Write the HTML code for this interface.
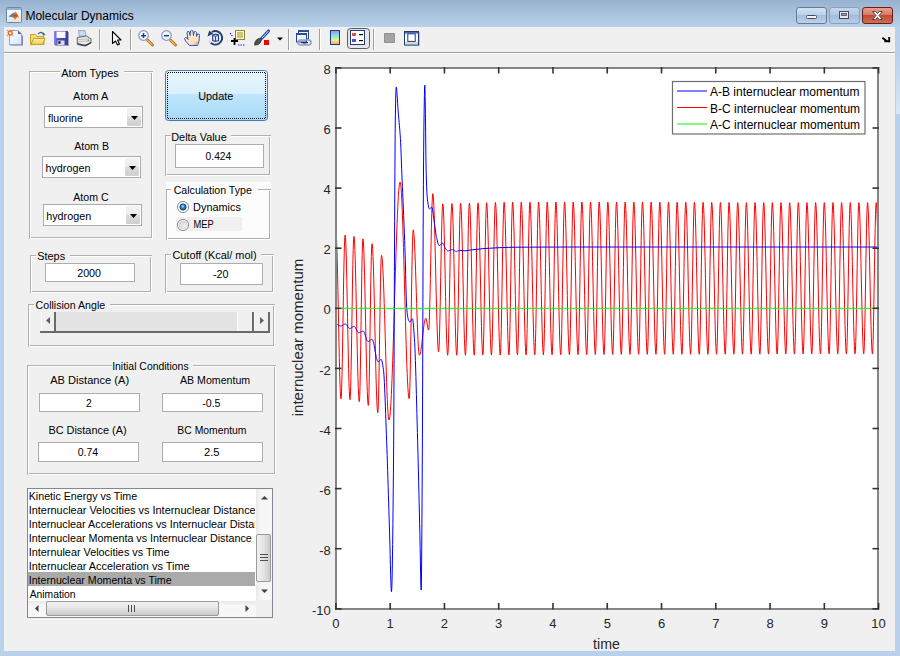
<!DOCTYPE html>
<html><head><meta charset="utf-8"><style>
html,body{margin:0;padding:0;width:900px;height:656px;overflow:hidden;background:#f0f0f0}
svg{display:block}
text{font-family:"Liberation Sans", sans-serif}
</style></head><body>
<svg width="900" height="656" viewBox="0 0 900 656">
<defs><linearGradient id="tb" x1="0" y1="0" x2="0" y2="1"><stop offset="0" stop-color="#97b2d0"/><stop offset="1" stop-color="#b9d1ea"/></linearGradient><linearGradient id="btnU" x1="0" y1="0" x2="0" y2="1"><stop offset="0" stop-color="#eaf6fd"/><stop offset="0.465" stop-color="#d9f0fc"/><stop offset="0.47" stop-color="#bee6fd"/><stop offset="1" stop-color="#a7d9f5"/></linearGradient><linearGradient id="ddb" x1="0" y1="0" x2="0" y2="1"><stop offset="0" stop-color="#f2f2f2"/><stop offset="0.47" stop-color="#ececec"/><stop offset="0.48" stop-color="#dcdcdc"/><stop offset="1" stop-color="#cfcfcf"/></linearGradient><radialGradient id="rsel" cx="0.45" cy="0.4" r="0.6"><stop offset="0" stop-color="#5cc4f8"/><stop offset="0.6" stop-color="#1a86c8"/><stop offset="1" stop-color="#0e4a80"/></radialGradient><linearGradient id="runsel" x1="0" y1="0" x2="1" y2="1"><stop offset="0" stop-color="#cfcfcf"/><stop offset="1" stop-color="#fafafa"/></linearGradient><linearGradient id="vth" x1="0" y1="0" x2="1" y2="0"><stop offset="0" stop-color="#f2f2f2"/><stop offset="0.45" stop-color="#e6e6e6"/><stop offset="1" stop-color="#c9c9c9"/></linearGradient><linearGradient id="hth" x1="0" y1="0" x2="0" y2="1"><stop offset="0" stop-color="#f2f2f2"/><stop offset="0.45" stop-color="#e6e6e6"/><stop offset="1" stop-color="#c9c9c9"/></linearGradient><linearGradient id="vtr" x1="0" y1="0" x2="1" y2="0"><stop offset="0" stop-color="#e8e8e8"/><stop offset="0.3" stop-color="#f6f6f6"/><stop offset="1" stop-color="#f8f8f8"/></linearGradient><linearGradient id="htr" x1="0" y1="0" x2="0" y2="1"><stop offset="0" stop-color="#e8e8e8"/><stop offset="0.3" stop-color="#f6f6f6"/><stop offset="1" stop-color="#f8f8f8"/></linearGradient><linearGradient id="rref" x1="0" y1="0" x2="0" y2="1"><stop offset="0" stop-color="#b9d1ea"/><stop offset="1" stop-color="#dae7f5"/></linearGradient></defs><rect x="0" y="0" width="900" height="656" fill="#b9d1ea" /><rect x="0" y="0" width="900" height="27" fill="url(#tb)" /><rect x="4" y="27" width="891" height="624" fill="#f0f0f0" /><rect x="896" y="52" width="4" height="62" fill="url(#rref)" /><text x="25.42" y="20" font-size="12.3" fill="#000" textLength="108.29" lengthAdjust="spacingAndGlyphs" >Molecular Dynamics</text><rect x="4" y="52" width="891" height="1" fill="#a0a0a0" /><rect x="4" y="53" width="891" height="1" fill="#ffffff" /><rect x="99" y="29" width="1" height="21" fill="#a0a0a0" /><rect x="100" y="29" width="1" height="21" fill="#ffffff" /><rect x="130" y="29" width="1" height="21" fill="#a0a0a0" /><rect x="131" y="29" width="1" height="21" fill="#ffffff" /><rect x="288" y="29" width="1" height="21" fill="#a0a0a0" /><rect x="289" y="29" width="1" height="21" fill="#ffffff" /><rect x="319" y="29" width="1" height="21" fill="#a0a0a0" /><rect x="320" y="29" width="1" height="21" fill="#ffffff" /><rect x="373" y="29" width="1" height="21" fill="#a0a0a0" /><rect x="374" y="29" width="1" height="21" fill="#ffffff" /><rect x="29" y="71" width="124" height="1" fill="#b0b0b0" /><rect x="29" y="71" width="1" height="168" fill="#b0b0b0" /><rect x="30" y="72" width="122" height="1" fill="#ffffff" /><rect x="30" y="72" width="1" height="166" fill="#ffffff" /><rect x="151" y="73" width="1" height="165" fill="#b0b0b0" /><rect x="31" y="237" width="121" height="1" fill="#b0b0b0" /><rect x="152" y="72" width="1" height="167" fill="#ffffff" /><rect x="30" y="238" width="123" height="1" fill="#ffffff" /><rect x="60" y="70" width="64" height="4" fill="#f0f0f0" /><text x="61.20" y="77" font-size="11" fill="#000" textLength="57.49" lengthAdjust="spacingAndGlyphs" >Atom Types</text><text x="73.10" y="100" font-size="11" fill="#000" textLength="35.27" lengthAdjust="spacingAndGlyphs" >Atom A</text><text x="74.20" y="150" font-size="11" fill="#000" textLength="34.78" lengthAdjust="spacingAndGlyphs" >Atom B</text><text x="73.30" y="201" font-size="11" fill="#000" textLength="35.36" lengthAdjust="spacingAndGlyphs" >Atom C</text><rect x="44" y="106" width="99" height="22" fill="#ffffff" /><rect x="44" y="106" width="99" height="1" fill="#acacb0" /><rect x="44" y="127" width="99" height="1" fill="#acacb0" /><rect x="44" y="106" width="1" height="22" fill="#acacb0" /><rect x="142" y="106" width="1" height="22" fill="#acacb0" /><rect x="127" y="108" width="14" height="18" fill="url(#ddb)" rx="1.5"/><path d="M131 116h7l-3.5 4z" fill="#000"/><text x="48.00" y="122" font-size="11" fill="#000" textLength="34.78" lengthAdjust="spacingAndGlyphs" >fluorine</text><rect x="42" y="156" width="99" height="22" fill="#ffffff" /><rect x="42" y="156" width="99" height="1" fill="#acacb0" /><rect x="42" y="177" width="99" height="1" fill="#acacb0" /><rect x="42" y="156" width="1" height="22" fill="#acacb0" /><rect x="140" y="156" width="1" height="22" fill="#acacb0" /><rect x="125" y="158" width="14" height="18" fill="url(#ddb)" rx="1.5"/><path d="M129 166h7l-3.5 4z" fill="#000"/><text x="45.50" y="172" font-size="11" fill="#000" textLength="44.88" lengthAdjust="spacingAndGlyphs" >hydrogen</text><rect x="43" y="204" width="99" height="22" fill="#ffffff" /><rect x="43" y="204" width="99" height="1" fill="#acacb0" /><rect x="43" y="225" width="99" height="1" fill="#acacb0" /><rect x="43" y="204" width="1" height="22" fill="#acacb0" /><rect x="141" y="204" width="1" height="22" fill="#acacb0" /><rect x="126" y="206" width="14" height="18" fill="url(#ddb)" rx="1.5"/><path d="M130 214h7l-3.5 4z" fill="#000"/><text x="46.20" y="220" font-size="11" fill="#000" textLength="45.08" lengthAdjust="spacingAndGlyphs" >hydrogen</text><rect x="165.5" y="70.5" width="102" height="50" rx="3" ry="3" fill="url(#btnU)" stroke="#3c7fb1" stroke-width="1"/><rect x="167" y="72" width="99" height="1" fill="url(#dots)" /><rect x="167" y="118" width="99" height="1" fill="url(#dots)" /><rect x="167" y="72" width="1" height="47" fill="url(#dots)" /><rect x="265" y="72" width="1" height="47" fill="url(#dots)" /><text x="198.21" y="100" font-size="11" fill="#000" textLength="35.07" lengthAdjust="spacingAndGlyphs" >Update</text><rect x="165" y="135" width="106" height="1" fill="#b0b0b0" /><rect x="165" y="135" width="1" height="41" fill="#b0b0b0" /><rect x="166" y="136" width="104" height="1" fill="#ffffff" /><rect x="166" y="136" width="1" height="39" fill="#ffffff" /><rect x="269" y="137" width="1" height="38" fill="#b0b0b0" /><rect x="167" y="174" width="103" height="1" fill="#b0b0b0" /><rect x="270" y="136" width="1" height="40" fill="#ffffff" /><rect x="166" y="175" width="105" height="1" fill="#ffffff" /><rect x="171" y="134" width="60" height="4" fill="#f0f0f0" /><text x="171.21" y="141" font-size="11" fill="#000" textLength="55.55" lengthAdjust="spacingAndGlyphs" >Delta Value</text><rect x="175" y="144" width="89" height="24" fill="#ffffff" /><rect x="175" y="144" width="89" height="1" fill="#abadb3" /><rect x="175" y="167" width="89" height="1" fill="#abadb3" /><rect x="175" y="144" width="1" height="24" fill="#abadb3" /><rect x="263" y="144" width="1" height="24" fill="#abadb3" /><text x="205.60" y="160" font-size="11" fill="#000" textLength="25.66" lengthAdjust="spacingAndGlyphs" >0.424</text><rect x="166" y="182" width="105" height="58" fill="#fcfcfc" /><rect x="166" y="189" width="105" height="1" fill="#b0b0b0" /><rect x="166" y="189" width="1" height="51" fill="#b0b0b0" /><rect x="167" y="190" width="103" height="1" fill="#ffffff" /><rect x="167" y="190" width="1" height="49" fill="#ffffff" /><rect x="269" y="191" width="1" height="48" fill="#b0b0b0" /><rect x="168" y="238" width="102" height="1" fill="#b0b0b0" /><rect x="270" y="190" width="1" height="50" fill="#ffffff" /><rect x="167" y="239" width="104" height="1" fill="#ffffff" /><rect x="171" y="188" width="87" height="4" fill="#fcfcfc" /><text x="173.70" y="194" font-size="11" fill="#000" textLength="78.12" lengthAdjust="spacingAndGlyphs" >Calculation Type</text><rect x="176" y="217" width="66" height="14" fill="#f0f0f0" /><circle cx="183" cy="207" r="5.6" fill="#fdfdfd" stroke="#8a8a8a" stroke-width="1"/><circle cx="183" cy="207" r="3.1" fill="url(#rsel)" stroke="#163d66" stroke-width="1"/><circle cx="182.8" cy="206.2" r="1.1" fill="#7fd0ff" opacity="0.9"/><circle cx="183" cy="225" r="5.6" fill="#fdfdfd" stroke="#8a8a8a" stroke-width="1"/><circle cx="183" cy="225" r="4" fill="url(#runsel)" stroke="#c4c4c4" stroke-width="0.6"/><text x="193.11" y="211" font-size="11" fill="#000" textLength="47.78" lengthAdjust="spacingAndGlyphs" >Dynamics</text><text x="193.55" y="228" font-size="11" fill="#000" textLength="20.22" lengthAdjust="spacingAndGlyphs" >MEP</text><rect x="30" y="255" width="122" height="1" fill="#b0b0b0" /><rect x="30" y="255" width="1" height="38" fill="#b0b0b0" /><rect x="31" y="256" width="120" height="1" fill="#ffffff" /><rect x="31" y="256" width="1" height="36" fill="#ffffff" /><rect x="150" y="257" width="1" height="35" fill="#b0b0b0" /><rect x="32" y="291" width="119" height="1" fill="#b0b0b0" /><rect x="151" y="256" width="1" height="37" fill="#ffffff" /><rect x="31" y="292" width="121" height="1" fill="#ffffff" /><rect x="36" y="254" width="34" height="4" fill="#f0f0f0" /><text x="37.20" y="260" font-size="11" fill="#000" textLength="27.94" lengthAdjust="spacingAndGlyphs" >Steps</text><rect x="45" y="263" width="90" height="19" fill="#ffffff" /><rect x="45" y="263" width="90" height="1" fill="#abadb3" /><rect x="45" y="281" width="90" height="1" fill="#abadb3" /><rect x="45" y="263" width="1" height="19" fill="#abadb3" /><rect x="134" y="263" width="1" height="19" fill="#abadb3" /><text x="77.20" y="277" font-size="11" fill="#000" textLength="23.87" lengthAdjust="spacingAndGlyphs" >2000</text><rect x="165" y="254" width="109" height="1" fill="#b0b0b0" /><rect x="165" y="254" width="1" height="39" fill="#b0b0b0" /><rect x="166" y="255" width="107" height="1" fill="#ffffff" /><rect x="166" y="255" width="1" height="37" fill="#ffffff" /><rect x="272" y="256" width="1" height="36" fill="#b0b0b0" /><rect x="167" y="291" width="106" height="1" fill="#b0b0b0" /><rect x="273" y="255" width="1" height="38" fill="#ffffff" /><rect x="166" y="292" width="108" height="1" fill="#ffffff" /><rect x="171" y="253" width="90" height="4" fill="#f0f0f0" /><text x="172.40" y="259" font-size="11" fill="#000" textLength="84.18" lengthAdjust="spacingAndGlyphs" >Cutoff (Kcal/ mol)</text><rect x="180" y="263" width="83" height="22" fill="#ffffff" /><rect x="180" y="263" width="83" height="1" fill="#abadb3" /><rect x="180" y="284" width="83" height="1" fill="#abadb3" /><rect x="180" y="263" width="1" height="22" fill="#abadb3" /><rect x="262" y="263" width="1" height="22" fill="#abadb3" /><text x="213.00" y="278" font-size="11" fill="#000" textLength="15.51" lengthAdjust="spacingAndGlyphs" >-20</text><rect x="28" y="304" width="247" height="1" fill="#b0b0b0" /><rect x="28" y="304" width="1" height="43" fill="#b0b0b0" /><rect x="29" y="305" width="245" height="1" fill="#ffffff" /><rect x="29" y="305" width="1" height="41" fill="#ffffff" /><rect x="273" y="306" width="1" height="40" fill="#b0b0b0" /><rect x="30" y="345" width="244" height="1" fill="#b0b0b0" /><rect x="274" y="305" width="1" height="42" fill="#ffffff" /><rect x="29" y="346" width="246" height="1" fill="#ffffff" /><rect x="34" y="303" width="76" height="4" fill="#f0f0f0" /><text x="35.60" y="309" font-size="11" fill="#000" textLength="69.55" lengthAdjust="spacingAndGlyphs" >Collision Angle</text><rect x="41" y="312" width="229" height="21" fill="#e3e3e3" /><rect x="41" y="312" width="15" height="21" fill="#f0f0f0" /><rect x="41" y="312" width="1" height="19" fill="#ffffff" /><rect x="54" y="312" width="2" height="21" fill="#6a6a6a" /><rect x="237" y="312" width="17" height="21" fill="#f0f0f0" /><rect x="237" y="312" width="1" height="19" fill="#ffffff" /><rect x="252" y="312" width="2" height="21" fill="#6a6a6a" /><rect x="254" y="312" width="16" height="21" fill="#f0f0f0" /><rect x="254" y="312" width="1" height="19" fill="#ffffff" /><rect x="268" y="312" width="2" height="21" fill="#6a6a6a" /><rect x="40" y="331" width="230" height="2" fill="#6a6a6a" /><path d="M46 320.5l4-3.5v7z" fill="#606060"/><path d="M264 320.5l-4-3.5v7z" fill="#606060"/><rect x="27" y="365" width="249" height="1" fill="#b0b0b0" /><rect x="27" y="365" width="1" height="110" fill="#b0b0b0" /><rect x="28" y="366" width="247" height="1" fill="#ffffff" /><rect x="28" y="366" width="1" height="108" fill="#ffffff" /><rect x="274" y="367" width="1" height="107" fill="#b0b0b0" /><rect x="29" y="473" width="246" height="1" fill="#b0b0b0" /><rect x="275" y="366" width="1" height="109" fill="#ffffff" /><rect x="28" y="474" width="248" height="1" fill="#ffffff" /><rect x="112" y="364" width="81" height="4" fill="#f0f0f0" /><text x="112.15" y="370" font-size="11" fill="#000" textLength="76.48" lengthAdjust="spacingAndGlyphs" >Initial Conditions</text><text x="50.20" y="384" font-size="11" fill="#000" textLength="78.95" lengthAdjust="spacingAndGlyphs" >AB Distance (A)</text><text x="180.00" y="384" font-size="11" fill="#000" textLength="70.12" lengthAdjust="spacingAndGlyphs" >AB Momentum</text><text x="48.41" y="434" font-size="11" fill="#000" textLength="78.15" lengthAdjust="spacingAndGlyphs" >BC Distance (A)</text><text x="177.36" y="434" font-size="11" fill="#000" textLength="69.08" lengthAdjust="spacingAndGlyphs" >BC Momentum</text><rect x="39" y="393" width="101" height="19" fill="#ffffff" /><rect x="39" y="393" width="101" height="1" fill="#abadb3" /><rect x="39" y="411" width="101" height="1" fill="#abadb3" /><rect x="39" y="393" width="1" height="19" fill="#abadb3" /><rect x="139" y="393" width="1" height="19" fill="#abadb3" /><text x="86.10" y="407" font-size="11" fill="#000" textLength="5.72" lengthAdjust="spacingAndGlyphs" >2</text><rect x="162" y="393" width="101" height="19" fill="#ffffff" /><rect x="162" y="393" width="101" height="1" fill="#abadb3" /><rect x="162" y="411" width="101" height="1" fill="#abadb3" /><rect x="162" y="393" width="1" height="19" fill="#abadb3" /><rect x="262" y="393" width="1" height="19" fill="#abadb3" /><text x="202.20" y="407" font-size="11" fill="#000" textLength="18.37" lengthAdjust="spacingAndGlyphs" >-0.5</text><rect x="38" y="442" width="101" height="20" fill="#ffffff" /><rect x="38" y="442" width="101" height="1" fill="#abadb3" /><rect x="38" y="461" width="101" height="1" fill="#abadb3" /><rect x="38" y="442" width="1" height="20" fill="#abadb3" /><rect x="138" y="442" width="1" height="20" fill="#abadb3" /><text x="77.80" y="456" font-size="11" fill="#000" textLength="20.40" lengthAdjust="spacingAndGlyphs" >0.74</text><rect x="162" y="442" width="101" height="20" fill="#ffffff" /><rect x="162" y="442" width="101" height="1" fill="#abadb3" /><rect x="162" y="461" width="101" height="1" fill="#abadb3" /><rect x="162" y="442" width="1" height="20" fill="#abadb3" /><rect x="262" y="442" width="1" height="20" fill="#abadb3" /><text x="203.90" y="456" font-size="11" fill="#000" textLength="15.60" lengthAdjust="spacingAndGlyphs" >2.5</text><rect x="27" y="488" width="246" height="130" fill="#ffffff" /><rect x="27" y="488" width="246" height="1" fill="#828790" /><rect x="27" y="617" width="246" height="1" fill="#828790" /><rect x="27" y="488" width="1" height="130" fill="#828790" /><rect x="272" y="488" width="1" height="130" fill="#828790" /><rect x="28" y="572" width="227" height="14" fill="#aaaaaa" /><svg x="28" y="489" width="227" height="112" overflow="hidden"><g transform="translate(-28,-489)"><text x="28.73" y="500" font-size="11" fill="#000" textLength="108.45" lengthAdjust="spacingAndGlyphs">Kinetic Energy vs Time</text><text x="28.71" y="514" font-size="11" fill="#000" textLength="226.97" lengthAdjust="spacingAndGlyphs">Internuclear Velocities vs Internuclear Distance</text><text x="28.72" y="528" font-size="11" fill="#000" textLength="242.91" lengthAdjust="spacingAndGlyphs">Internuclear Accelerations vs Internuclear Distance</text><text x="28.72" y="542" font-size="11" fill="#000" textLength="223.04" lengthAdjust="spacingAndGlyphs">Internuclear Momenta vs Internuclear Distance</text><text x="28.71" y="556" font-size="11" fill="#000" textLength="140.96" lengthAdjust="spacingAndGlyphs">Internulear Velocities vs Time</text><text x="28.71" y="570" font-size="11" fill="#000" textLength="160.92" lengthAdjust="spacingAndGlyphs">Internuclear Acceleration vs Time</text><text x="28.73" y="584" font-size="11" fill="#000" textLength="142.92" lengthAdjust="spacingAndGlyphs">Internuclear Momenta vs Time</text><text x="29.70" y="598" font-size="11" fill="#000" textLength="45.93" lengthAdjust="spacingAndGlyphs">Animation</text></g></svg><rect x="256" y="489" width="16" height="111" fill="url(#vtr)" /><path d="M261 499.5l3.5-3.5l3.5 3.5z" fill="#404040"/><rect x="256.5" y="534.5" width="14" height="47" rx="1.5" fill="url(#vth)" stroke="#9a9a9a"/><rect x="260" y="554" width="8" height="1" fill="#505050" /><rect x="260" y="557" width="8" height="1" fill="#505050" /><rect x="260" y="560" width="8" height="1" fill="#505050" /><path d="M261 589.5l3.5 3.5l3.5-3.5z" fill="#404040"/><rect x="28" y="601" width="228" height="16" fill="url(#htr)" /><rect x="256" y="600" width="16" height="17" fill="#f0f0f0" /><rect x="46.5" y="601.5" width="172" height="14" rx="1.5" fill="url(#hth)" stroke="#9a9a9a"/><rect x="128" y="605" width="1" height="7" fill="#505050" /><rect x="131" y="605" width="1" height="7" fill="#505050" /><rect x="134" y="605" width="1" height="7" fill="#505050" /><path d="M35 608.5l3.5-3.5v7z" fill="#404040"/><path d="M249 608.5l-3.5-3.5v7z" fill="#404040"/><defs><linearGradient id="gpage" x1="0" y1="0" x2="1" y2="1"><stop offset="0" stop-color="#ffffff"/><stop offset="1" stop-color="#d6e6fa"/></linearGradient><linearGradient id="gfold" x1="0" y1="0" x2="0" y2="1"><stop offset="0" stop-color="#fff4b0"/><stop offset="1" stop-color="#f0c848"/></linearGradient><linearGradient id="gcbar" x1="0" y1="0" x2="0" y2="1"><stop offset="0" stop-color="#a090f0"/><stop offset="0.35" stop-color="#80e0f0"/><stop offset="0.7" stop-color="#f0f080"/><stop offset="1" stop-color="#f8a070"/></linearGradient><linearGradient id="gmin" x1="0" y1="0" x2="0" y2="1"><stop offset="0" stop-color="#d4e3f3"/><stop offset="0.45" stop-color="#bcd2ea"/><stop offset="0.5" stop-color="#a4bedc"/><stop offset="1" stop-color="#bcd3ec"/></linearGradient><linearGradient id="gmax" x1="0" y1="0" x2="0" y2="1"><stop offset="0" stop-color="#c4d6ec"/><stop offset="0.45" stop-color="#b2c9e4"/><stop offset="0.5" stop-color="#a2bcdc"/><stop offset="1" stop-color="#b6cee8"/></linearGradient><linearGradient id="gclose" x1="0" y1="0" x2="0" y2="1"><stop offset="0" stop-color="#e8a091"/><stop offset="0.45" stop-color="#d77c69"/><stop offset="0.5" stop-color="#c44a30"/><stop offset="1" stop-color="#d0705a"/></linearGradient><linearGradient id="gicon" x1="0" y1="0" x2="0" y2="1"><stop offset="0" stop-color="#ffffff"/><stop offset="1" stop-color="#e4e4e4"/></linearGradient><linearGradient id="gpeak" x1="0" y1="0" x2="0" y2="1"><stop offset="0" stop-color="#f0c020"/><stop offset="0.5" stop-color="#e04010"/><stop offset="1" stop-color="#f0a020"/></linearGradient><pattern id="dots" patternUnits="userSpaceOnUse" width="2" height="2"><rect x="0" y="0" width="1" height="1" fill="#000"/><rect x="1" y="1" width="1" height="1" fill="#000"/></pattern><linearGradient id="gsave" x1="0" y1="0" x2="1" y2="0"><stop offset="0" stop-color="#8a8ae8"/><stop offset="0.3" stop-color="#5050c0"/><stop offset="1" stop-color="#3a3aa0"/></linearGradient></defs><rect x="6.5" y="7.5" width="15" height="15" rx="1" fill="url(#gicon)" stroke="#75869a"/><rect x="7" y="8" width="14" height="2" fill="#8fb4d8"/><path d="M8.5 16.5 L13 13 L15 12.5 L13.5 17.5 Z" fill="#3a8ad0"/><path d="M13 17 L15.3 11 L17 13.5 L19.5 19 L17.5 16.5 L15 20 Z" fill="url(#gpeak)"/><rect x="796.5" y="7.5" width="30" height="16" rx="2.5" fill="url(#gmin)" stroke="#6a7a90"/><rect x="806.5" y="15.5" width="10" height="3" rx="1" fill="#f4f4f4" stroke="#4a4a5a"/><rect x="829.5" y="7.5" width="30" height="16" rx="2.5" fill="url(#gmax)" stroke="#8aa2bf"/><rect x="839.5" y="11.5" width="9" height="7" fill="#e8e8e8" stroke="#4a4a5a"/><rect x="841.5" y="13.5" width="5" height="2" fill="#8aa2bf" stroke="#4a4a5a" stroke-width="0.8"/><rect x="862.5" y="7.5" width="30" height="16" rx="2.5" fill="url(#gclose)" stroke="#6e1c14"/><path d="M872.5 11.5 L875.5 11.5 L877.5 13.5 L879.5 11.5 L882.5 11.5 L879 15.5 L882.5 19.5 L879.5 19.5 L877.5 17.3 L875.5 19.5 L872.5 19.5 L876 15.5 Z" fill="#ffffff" stroke="#4a4a4a" stroke-width="1"/><path d="M10.5 32 h8.5 l3.8 3.8 v9.8 h-12.3 z" fill="#6a6ea8"/><path d="M9.5 30.5 h8.5 l3.5 3.5 v10.5 h-12 z" fill="url(#gpage)" stroke="#86a6da"/><path d="M18 30.5 v3.5 h3.5 z" fill="#5a5ea0"/><circle cx="10.2" cy="33" r="2" fill="#eef080" stroke="#e86a3a" stroke-width="1.4"/><circle cx="7.3" cy="30.3" r="0.6" fill="#e86a3a"/><circle cx="12.9" cy="30.3" r="0.6" fill="#e86a3a"/><circle cx="7.3" cy="35.7" r="0.6" fill="#e86a3a"/><circle cx="12.9" cy="35.7" r="0.6" fill="#e86a3a"/><path d="M30.5 34.5 h5 l1.5 2 h7 v8 h-13.5 z" fill="#f6dc78" stroke="#c9a020"/><path d="M31 44.5 l2.5 -6 h11.5 l-2.5 6 z" fill="url(#gfold)" stroke="#c9a020"/><path d="M38 34 q3 -3 6 0" fill="none" stroke="#4a6aa8" stroke-width="1.2"/><path d="M43 32.5 l2.5 2.5 l-3 0.5 z" fill="#3a5a98"/><rect x="55" y="32" width="14" height="14" fill="#5a6a8a" opacity="0.55"/><rect x="54" y="31" width="14" height="14" rx="0.5" fill="url(#gsave)"/><rect x="56.5" y="31.5" width="9" height="6.5" fill="#f8f8ff"/><rect x="57.5" y="40.5" width="7" height="4.5" fill="#d8d8ec"/><rect x="58.3" y="41.3" width="2.2" height="2.4" fill="#101020"/><path d="M78.5 30.5 L84.8 30.5 L86.3 36.2 L79.2 36.2 Z" fill="#c4dcfa" stroke="#7c88c0" stroke-width="0.7"/><path d="M77.3 37.5 L86.5 36 L91 39 L91 43 L85.5 46 L77.3 44.5 Z" fill="#ececec" stroke="#5a5a5a" stroke-width="0.9" stroke-linejoin="round"/><path d="M78 39.5 L89.5 38.8 M78 41.5 L90 41" stroke="#a8a8a8" stroke-width="0.7"/><path d="M77.5 43.5 L85 45.5 L91 42.5" stroke="#303030" stroke-width="1.2" fill="none"/><rect x="87.6" y="39.6" width="1.4" height="1.4" fill="#38b838"/><rect x="83.5" y="44.3" width="1.6" height="1.2" fill="#6a6ad0"/><path d="M112.5 31.5 v12 l3 -2.5 l2 4 l2 -1 l-2 -4 h3.5 z" fill="#ffffff" stroke="#000" stroke-width="1.1" stroke-linejoin="round"/><path d="M147.5 40 l5 5" stroke="#b07020" stroke-width="3" stroke-linecap="round"/><path d="M147.5 40 l4.5 4.5" stroke="#f0b040" stroke-width="1.6" stroke-linecap="round"/><circle cx="143.5" cy="35.5" r="4.8" fill="#e8f8fc" stroke="#9090d0" stroke-width="1.2"/><rect x="141.0" y="35" width="5" height="1.4" fill="#203a7a"/><rect x="142.8" y="33" width="1.4" height="5" fill="#203a7a"/><path d="M170.5 40 l5 5" stroke="#b07020" stroke-width="3" stroke-linecap="round"/><path d="M170.5 40 l4.5 4.5" stroke="#f0b040" stroke-width="1.6" stroke-linecap="round"/><circle cx="166.5" cy="35.5" r="4.8" fill="#e8f8fc" stroke="#9090d0" stroke-width="1.2"/><rect x="164.0" y="35" width="5" height="1.4" fill="#203a7a"/><path d="M189.5 45.5 L185.5 41 L184.5 38.5 L185.5 37.5 L187 38 L188 39.5 L187 33 L187.5 31.5 L189 31.5 L190 35.5 L190.5 31 L191.5 30.3 L193 31 L193.5 35.5 L194 32 L195.5 31.5 L196.5 32.5 L196.5 36.5 L197.5 34 L199 34 L199.5 35.5 L199 41 L197.5 45.5 Z" fill="#fde3c4" stroke="#2a58c8" stroke-width="1" stroke-linejoin="round"/><path d="M193 45 L197 45 L198.5 40 L196 42 Z" fill="#e8b47c" opacity="0.8"/><path d="M209.5 41.3 A6.8 6.8 0 1 0 211.9 32" fill="none" stroke="#223c7c" stroke-width="1.9"/><path d="M208.8 40.3 L210.8 42.8" stroke="#dfe3ee" stroke-width="2.2"/><path d="M207.4 36.4 L209.3 30.4 L213.2 33.8 Z" fill="#223c7c"/><path d="M212.7 35 L215.5 34 L218.5 35 L218.5 40.5 L215.5 41.5 L212.7 40.5 Z" fill="#dbe6fa" stroke="#223c7c" stroke-width="1.1"/><path d="M213 35.3 L215.5 36.3 L218.3 35.3 M215.5 36.3 V41" stroke="#223c7c" stroke-width="0.9" fill="none"/><rect x="235.5" y="30.5" width="9" height="9" fill="#fff8c0" stroke="#908830"/><rect x="237" y="32.5" width="6" height="0.9" fill="#908830"/><rect x="237" y="34.5" width="6" height="0.9" fill="#908830"/><rect x="237" y="36.5" width="6" height="0.9" fill="#908830"/><path d="M230 33 l3 4 M238 45 h7" stroke="#2020f0" stroke-width="1.1" stroke-dasharray="1.5 1"/><path d="M231 41 h7 M234.5 38 v7" stroke="#000" stroke-width="1.8"/><path d="M262 38 l6.5 -7" stroke="#3050b0" stroke-width="3.2" stroke-linecap="round"/><path d="M262 38 l6.5 -7" stroke="#c0d0f8" stroke-width="1" /><path d="M254.5 45 q0 -4 3 -6 l3 -1 l1 1.5 l-1 3 q-2 3 -6 2.5 z" fill="#505050" stroke="#303030" stroke-width="0.8"/><rect x="264" y="40" width="5" height="5" fill="#ee0000"/><path d="M277 37.5 h6 l-3 3 z" fill="#000"/><rect x="298.5" y="30.5" width="10" height="8.5" fill="#f4f6fc" stroke="#24428e"/><rect x="298" y="30" width="11" height="2" fill="#2c4c9c"/><rect x="296.5" y="33.5" width="10" height="8.5" fill="#eef2fa" stroke="#24428e"/><rect x="296" y="33" width="11" height="2" fill="#2c4c9c"/><rect x="298" y="40" width="7.5" height="5" rx="2.5" fill="none" stroke="#8ea2c4" stroke-width="1.6"/><rect x="303.5" y="40" width="7.5" height="5" rx="2.5" fill="none" stroke="#8ea2c4" stroke-width="1.6"/><rect x="301" y="42" width="7" height="1.2" fill="#1a2a5a"/><rect x="330.5" y="30.5" width="9" height="14" fill="url(#gcbar)" stroke="#203a80"/><rect x="347.5" y="28.5" width="22" height="20" rx="3" fill="#e6e6e6" stroke="#5a5a5a"/><rect x="350.5" y="30.5" width="14" height="14" fill="#ffffff" stroke="#203a80"/><rect x="352" y="33" width="4" height="3" fill="#e05050"/><rect x="352" y="39" width="4" height="3" fill="#5050e0"/><rect x="359" y="34" width="4" height="1.2" fill="#000"/><rect x="359" y="40" width="4" height="1.2" fill="#000"/><rect x="384" y="33" width="11" height="10" rx="1" fill="#909090"/><rect x="385" y="34" width="9" height="8" fill="#a4a4a4"/><rect x="405" y="32" width="15" height="14" fill="#8a9ab0" opacity="0.5"/><rect x="404.5" y="31.5" width="14" height="13.5" fill="#fbfbf4" stroke="#203a80"/><rect x="405" y="32" width="13" height="1.6" fill="#4a6ac0"/><rect x="407.8" y="33.8" width="7.4" height="7.6" fill="#ffffff" stroke="#203a80" stroke-width="1"/><rect x="405" y="42" width="13" height="2" fill="#ddd8c0"/><path d="M882.4 37.8 L887 41.2" stroke="#000" stroke-width="1.9"/><rect x="888.3" y="37" width="1.8" height="5.2" fill="#000"/><rect x="884.3" y="40.3" width="5.8" height="1.9" fill="#000"/>
<rect x="336" y="68" width="542" height="541" fill="#ffffff"/><svg x="336" y="68" width="542" height="541" overflow="hidden"><g transform="translate(-336,-68)"><path d="M335.90 233.50 L336.24 235.31 L336.58 240.65 L336.92 249.28 L337.26 260.85 L337.60 274.82 L337.94 290.61 L338.28 307.51 L338.62 324.79 L338.96 341.69 L339.30 357.48 L339.64 371.45 L339.98 383.02 L340.32 391.65 L340.66 396.99 L341.00 398.80 L341.34 396.01 L341.68 387.83 L342.02 374.83 L342.37 357.88 L342.71 338.13 L343.05 316.95 L343.39 295.77 L343.73 276.03 L344.08 259.07 L344.42 246.07 L344.76 237.89 L345.10 235.10 L345.45 237.16 L345.80 243.25 L346.15 253.06 L346.50 266.09 L346.85 281.69 L347.20 299.09 L347.55 317.40 L347.90 335.71 L348.25 353.11 L348.60 368.71 L348.95 381.74 L349.30 391.55 L349.65 397.64 L350.00 399.70 L350.35 396.39 L350.71 386.74 L351.06 371.52 L351.42 351.97 L351.77 329.67 L352.13 306.43 L352.48 284.13 L352.84 264.58 L353.19 249.36 L353.55 239.71 L353.90 236.40 L354.24 237.99 L354.57 242.69 L354.91 250.33 L355.25 260.61 L355.59 273.13 L355.93 287.42 L356.26 302.93 L356.60 319.05 L356.94 335.17 L357.27 350.68 L357.61 364.97 L357.95 377.49 L358.29 387.77 L358.62 395.41 L358.96 400.11 L359.30 401.70 L359.66 397.71 L360.02 386.14 L360.38 368.13 L360.74 345.42 L361.10 320.25 L361.46 295.08 L361.82 272.37 L362.18 254.36 L362.54 242.79 L362.90 238.80 L363.24 240.40 L363.57 245.14 L363.91 252.84 L364.25 263.20 L364.59 275.82 L364.93 290.22 L365.26 305.85 L365.60 322.10 L365.94 338.35 L366.27 353.98 L366.61 368.38 L366.95 381.00 L367.29 391.36 L367.62 399.06 L367.96 403.80 L368.30 405.40 L368.64 402.13 L368.97 392.57 L369.31 377.50 L369.65 358.14 L369.98 336.06 L370.32 313.04 L370.65 290.96 L370.99 271.60 L371.33 256.53 L371.66 246.97 L372.00 243.70 L372.34 245.14 L372.68 249.41 L373.02 256.36 L373.36 265.75 L373.71 277.28 L374.05 290.54 L374.39 305.08 L374.73 320.40 L375.07 336.00 L375.41 351.32 L375.75 365.86 L376.09 379.12 L376.44 390.65 L376.78 400.04 L377.12 406.99 L377.46 411.26 L377.80 412.70 L378.14 409.51 L378.47 400.21 L378.81 385.55 L379.15 366.72 L379.48 345.24 L379.82 322.86 L380.15 301.38 L380.49 282.55 L380.83 267.89 L381.16 258.59 L381.50 255.40 L381.84 256.24 L382.18 258.73 L382.52 262.84 L382.86 268.46 L383.20 275.50 L383.55 283.80 L383.89 293.21 L384.23 303.51 L384.57 314.51 L384.91 325.99 L385.25 337.70 L385.59 349.41 L385.93 360.89 L386.27 371.89 L386.61 382.19 L386.95 391.60 L387.30 399.90 L387.64 406.94 L387.98 412.56 L388.32 416.67 L388.66 419.16 L389.00 420.00 L389.34 419.46 L389.67 417.85 L390.01 415.18 L390.35 411.48 L390.68 406.77 L391.02 401.11 L391.35 394.54 L391.69 387.12 L392.03 378.93 L392.36 370.03 L392.70 360.50 L393.04 350.43 L393.37 339.92 L393.71 329.06 L394.05 317.94 L394.38 306.66 L394.72 295.34 L395.05 284.06 L395.39 272.94 L395.73 262.08 L396.06 251.57 L396.40 241.50 L396.74 231.97 L397.07 223.07 L397.41 214.88 L397.75 207.46 L398.08 200.89 L398.42 195.23 L398.75 190.52 L399.09 186.82 L399.43 184.15 L399.76 182.54 L400.10 182.00 L400.44 182.73 L400.77 184.92 L401.11 188.53 L401.45 193.52 L401.79 199.82 L402.12 207.35 L402.46 216.00 L402.80 225.65 L403.13 236.17 L403.47 247.43 L403.81 259.27 L404.14 271.54 L404.48 284.05 L404.82 296.65 L405.16 309.16 L405.49 321.43 L405.83 333.27 L406.17 344.52 L406.50 355.05 L406.84 364.70 L407.18 373.35 L407.51 380.88 L407.85 387.18 L408.19 392.17 L408.53 395.78 L408.86 397.97 L409.20 398.70 L409.53 395.82 L409.87 387.39 L410.20 373.98 L410.53 356.50 L410.87 336.14 L411.20 314.30 L411.53 292.46 L411.87 272.10 L412.20 254.62 L412.53 241.21 L412.87 232.78 L413.20 229.90 L413.54 230.85 L413.89 233.68 L414.23 238.29 L414.58 244.56 L414.92 252.28 L415.27 261.23 L415.61 271.12 L415.96 281.67 L416.30 292.55 L416.64 303.43 L416.99 313.98 L417.33 323.88 L417.68 332.82 L418.02 340.54 L418.37 346.81 L418.71 351.42 L419.06 354.25 L419.40 355.20 L419.74 354.95 L420.07 354.20 L420.41 352.97 L420.75 351.30 L421.08 349.23 L421.42 346.82 L421.76 344.13 L422.09 341.24 L422.43 338.23 L422.77 335.17 L423.11 332.16 L423.44 329.27 L423.78 326.58 L424.12 324.17 L424.45 322.10 L424.79 320.43 L425.13 319.20 L425.46 318.45 L425.80 318.20 L426.15 318.65 L426.50 319.93 L426.85 321.84 L427.20 324.10 L427.55 326.36 L427.90 328.27 L428.25 329.55 L428.60 330.00 L428.95 327.68 L429.30 320.87 L429.65 310.04 L430.00 295.93 L430.35 279.49 L430.70 261.85 L431.05 244.21 L431.40 227.78 L431.75 213.66 L432.10 202.83 L432.45 196.02 L432.80 193.70 L433.14 195.05 L433.48 199.04 L433.82 205.54 L434.16 214.33 L434.51 225.11 L434.85 237.51 L435.19 251.12 L435.53 265.46 L435.87 280.04 L436.21 294.38 L436.55 307.99 L436.89 320.39 L437.24 331.17 L437.58 339.96 L437.92 346.46 L438.26 350.45 L438.60 351.80 L438.95 349.28 L439.30 341.89 L439.65 330.13 L440.00 314.80 L440.35 296.95 L440.70 277.80 L441.05 258.65 L441.40 240.80 L441.75 225.47 L442.10 213.71 L442.45 206.32 L442.80 203.80 L443.15 205.70 L443.49 211.30 L443.84 220.33 L444.19 232.32 L444.53 246.68 L444.88 262.69 L445.23 279.55 L445.57 296.41 L445.92 312.42 L446.26 326.78 L446.61 338.77 L446.96 347.80 L447.30 353.40 L447.65 355.30 L448.00 352.71 L448.36 345.14 L448.71 333.08 L449.07 317.37 L449.42 299.07 L449.77 279.43 L450.13 259.79 L450.48 241.50 L450.84 225.78 L451.19 213.73 L451.55 206.15 L451.90 203.56 L452.25 205.46 L452.59 211.07 L452.94 220.11 L453.29 232.12 L453.63 246.50 L453.98 262.53 L454.32 279.41 L454.67 296.29 L455.02 312.32 L455.36 326.70 L455.71 338.71 L456.06 347.74 L456.40 353.35 L456.75 355.25 L457.10 352.18 L457.45 343.20 L457.80 329.04 L458.15 310.85 L458.50 290.10 L458.85 268.48 L459.20 247.74 L459.55 229.55 L459.90 215.39 L460.25 206.41 L460.60 203.33 L460.95 205.24 L461.29 210.85 L461.64 219.90 L461.99 231.92 L462.33 246.32 L462.68 262.37 L463.03 279.27 L463.37 296.17 L463.72 312.22 L464.06 326.62 L464.41 338.64 L464.76 347.69 L465.10 353.31 L465.45 355.21 L465.81 352.13 L466.17 343.14 L466.53 328.96 L466.89 310.75 L467.25 289.98 L467.60 268.33 L467.96 247.56 L468.32 229.35 L468.68 215.18 L469.04 206.18 L469.40 203.10 L469.75 205.01 L470.09 210.63 L470.44 219.69 L470.79 231.73 L471.13 246.15 L471.48 262.22 L471.82 279.14 L472.17 296.05 L472.52 312.12 L472.86 326.54 L473.21 338.58 L473.56 347.64 L473.90 353.26 L474.25 355.17 L474.59 352.08 L474.93 343.08 L475.27 328.89 L475.61 310.65 L475.95 289.86 L476.30 268.19 L476.64 247.39 L476.98 229.16 L477.32 214.97 L477.66 205.96 L478.00 202.88 L478.35 204.79 L478.69 210.42 L479.04 219.49 L479.39 231.54 L479.73 245.97 L480.08 262.06 L480.43 279.00 L480.77 295.94 L481.12 312.03 L481.46 326.46 L481.81 338.52 L482.16 347.59 L482.50 353.22 L482.85 355.12 L483.19 352.04 L483.53 343.02 L483.87 328.81 L484.21 310.56 L484.55 289.74 L484.90 268.04 L485.24 247.22 L485.58 228.97 L485.92 214.76 L486.26 205.75 L486.60 202.66 L486.95 204.57 L487.29 210.21 L487.64 219.29 L487.99 231.35 L488.33 245.80 L488.68 261.91 L489.03 278.87 L489.37 295.83 L489.72 311.94 L490.06 326.39 L490.41 338.45 L490.76 347.53 L491.10 353.17 L491.45 355.08 L491.81 351.99 L492.17 342.96 L492.53 328.74 L492.89 310.46 L493.25 289.62 L493.60 267.90 L493.96 247.05 L494.32 228.78 L494.68 214.55 L495.04 205.53 L495.40 202.43 L495.75 204.35 L496.09 209.99 L496.44 219.08 L496.79 231.16 L497.13 245.63 L497.48 261.76 L497.82 278.74 L498.17 295.71 L498.52 311.84 L498.86 326.31 L499.21 338.39 L499.56 347.48 L499.90 353.12 L500.25 355.04 L500.60 351.94 L500.95 342.91 L501.30 328.67 L501.65 310.38 L502.00 289.51 L502.35 267.77 L502.70 246.90 L503.05 228.61 L503.40 214.37 L503.75 205.34 L504.10 202.24 L504.45 204.16 L504.79 209.80 L505.14 218.90 L505.49 231.00 L505.83 245.48 L506.18 261.62 L506.53 278.62 L506.87 295.61 L507.22 311.76 L507.56 326.24 L507.91 338.33 L508.26 347.43 L508.60 353.08 L508.95 354.99 L509.32 351.25 L509.68 340.40 L510.05 323.50 L510.41 302.20 L510.78 278.60 L511.14 254.99 L511.51 233.69 L511.87 216.79 L512.24 205.94 L512.60 202.20 L512.95 204.11 L513.29 209.76 L513.64 218.86 L513.99 230.96 L514.33 245.44 L514.68 261.58 L515.03 278.58 L515.37 295.57 L515.72 311.71 L516.06 326.19 L516.41 338.29 L516.76 347.39 L517.10 353.04 L517.45 354.95 L517.80 351.86 L518.14 342.82 L518.49 328.58 L518.83 310.29 L519.18 289.43 L519.53 267.68 L519.87 246.82 L520.22 228.53 L520.56 214.29 L520.91 205.26 L521.26 202.16 L521.60 204.08 L521.95 209.72 L522.30 218.82 L522.64 230.92 L522.99 245.40 L523.34 261.54 L523.68 278.53 L524.03 295.53 L524.38 311.67 L524.72 326.15 L525.07 338.25 L525.41 347.34 L525.76 352.99 L526.11 354.91 L526.45 351.81 L526.80 342.78 L527.15 328.54 L527.49 310.25 L527.84 289.39 L528.18 267.65 L528.53 246.78 L528.88 228.49 L529.22 214.25 L529.57 205.22 L529.91 202.13 L530.26 204.04 L530.61 209.69 L530.95 218.79 L531.30 230.88 L531.65 245.36 L531.99 261.50 L532.34 278.49 L532.69 295.49 L533.03 311.63 L533.38 326.11 L533.73 338.20 L534.07 347.30 L534.42 352.95 L534.76 354.86 L535.11 351.77 L535.46 342.74 L535.80 328.50 L536.15 310.21 L536.49 289.35 L536.84 267.61 L537.19 246.75 L537.53 228.46 L537.88 214.22 L538.23 205.19 L538.57 202.09 L538.92 204.01 L539.26 209.66 L539.61 218.75 L539.96 230.85 L540.30 245.32 L540.65 261.47 L541.00 278.46 L541.34 295.45 L541.69 311.59 L542.04 326.07 L542.38 338.16 L542.73 347.26 L543.08 352.91 L543.42 354.82 L543.77 351.73 L544.11 342.70 L544.46 328.46 L544.81 310.17 L545.15 289.31 L545.50 267.57 L545.84 246.72 L546.19 228.43 L546.54 214.19 L546.88 205.16 L547.23 202.07 L547.57 203.98 L547.92 209.63 L548.27 218.73 L548.61 230.82 L548.96 245.29 L549.31 261.43 L549.65 278.42 L550.00 295.41 L550.35 311.55 L550.69 326.03 L551.04 338.12 L551.39 347.22 L551.73 352.86 L552.08 354.78 L552.42 351.68 L552.77 342.65 L553.12 328.42 L553.46 310.13 L553.81 289.28 L554.16 267.54 L554.50 246.69 L554.85 228.40 L555.19 214.17 L555.54 205.14 L555.89 202.04 L556.23 203.96 L556.58 209.60 L556.92 218.70 L557.27 230.79 L557.62 245.26 L557.96 261.40 L558.31 278.39 L558.66 295.38 L559.00 311.51 L559.35 325.99 L559.70 338.08 L560.04 347.17 L560.39 352.82 L560.74 354.73 L561.08 351.64 L561.43 342.61 L561.77 328.38 L562.12 310.10 L562.47 289.25 L562.81 267.51 L563.16 246.66 L563.50 228.38 L563.85 214.15 L564.20 205.12 L564.54 202.03 L564.89 203.94 L565.24 209.59 L565.58 218.68 L565.93 230.77 L566.27 245.24 L566.62 261.37 L566.97 278.36 L567.31 295.34 L567.66 311.48 L568.01 325.95 L568.35 338.04 L568.70 347.13 L569.05 352.78 L569.39 354.69 L569.74 351.60 L570.09 342.57 L570.43 328.34 L570.78 310.06 L571.12 289.22 L571.47 267.49 L571.82 246.64 L572.16 228.36 L572.51 214.13 L572.85 205.10 L573.20 202.01 L573.55 203.93 L573.89 209.57 L574.24 218.66 L574.59 230.75 L574.93 245.22 L575.28 261.35 L575.62 278.33 L575.97 295.31 L576.32 311.44 L576.66 325.91 L577.01 338.00 L577.36 347.09 L577.70 352.73 L578.05 354.65 L578.40 351.56 L578.74 342.53 L579.09 328.31 L579.43 310.03 L579.78 289.19 L580.13 267.46 L580.47 246.62 L580.82 228.35 L581.16 214.12 L581.51 205.10 L581.86 202.00 L582.20 203.92 L582.55 209.56 L582.90 218.65 L583.24 230.73 L583.59 245.20 L583.94 261.33 L584.28 278.30 L584.63 295.28 L584.97 311.41 L585.32 325.88 L585.67 337.96 L586.01 347.05 L586.36 352.69 L586.71 354.60 L587.05 351.51 L587.40 342.49 L587.75 328.27 L588.09 310.00 L588.44 289.16 L588.78 267.44 L589.13 246.61 L589.48 228.34 L589.82 214.11 L590.17 205.09 L590.51 202.00 L590.86 203.91 L591.21 209.55 L591.55 218.64 L591.90 230.72 L592.25 245.18 L592.59 261.31 L592.94 278.28 L593.29 295.25 L593.63 311.38 L593.98 325.84 L594.32 337.92 L594.67 347.01 L595.02 352.65 L595.36 354.56 L595.71 351.47 L596.06 342.45 L596.40 328.23 L596.75 309.97 L597.09 289.14 L597.44 267.43 L597.79 246.59 L598.13 228.33 L598.48 214.11 L598.83 205.09 L599.17 202.00 L599.52 203.91 L599.86 209.55 L600.21 218.64 L600.56 230.71 L600.90 245.17 L601.25 261.29 L601.60 278.26 L601.94 295.23 L602.29 311.35 L602.64 325.81 L602.98 337.88 L603.33 346.97 L603.67 352.61 L604.02 354.52 L604.37 351.43 L604.71 342.41 L605.06 328.20 L605.41 309.94 L605.75 289.12 L606.10 267.41 L606.44 246.59 L606.79 228.33 L607.14 214.11 L607.48 205.10 L607.83 202.01 L608.17 203.92 L608.52 209.56 L608.87 218.64 L609.21 230.71 L609.56 245.16 L609.91 261.28 L610.25 278.24 L610.60 295.20 L610.95 311.32 L611.29 325.77 L611.64 337.84 L611.99 346.93 L612.33 352.56 L612.68 354.47 L613.02 351.39 L613.37 342.37 L613.72 328.17 L614.06 309.91 L614.41 289.10 L614.76 267.40 L615.10 246.58 L615.45 228.33 L615.79 214.12 L616.14 205.11 L616.49 202.02 L616.83 203.93 L617.18 209.57 L617.52 218.64 L617.87 230.71 L618.22 245.16 L618.56 261.27 L618.91 278.22 L619.26 295.18 L619.60 311.29 L619.95 325.74 L620.30 337.81 L620.64 346.88 L620.99 352.52 L621.34 354.43 L621.68 351.34 L622.03 342.34 L622.37 328.13 L622.72 309.89 L623.07 289.08 L623.41 267.39 L623.76 246.58 L624.10 228.33 L624.45 214.13 L624.80 205.12 L625.14 202.03 L625.49 203.94 L625.84 209.58 L626.18 218.65 L626.53 230.72 L626.87 245.16 L627.22 261.26 L627.57 278.21 L627.91 295.16 L628.26 311.26 L628.61 325.71 L628.95 337.77 L629.30 346.84 L629.65 352.48 L629.99 354.39 L630.34 351.30 L630.69 342.30 L631.03 328.10 L631.38 309.86 L631.72 289.06 L632.07 267.38 L632.42 246.58 L632.76 228.34 L633.11 214.15 L633.45 205.14 L633.80 202.05 L634.15 203.96 L634.49 209.60 L634.84 218.67 L635.19 230.72 L635.53 245.16 L635.88 261.26 L636.22 278.20 L636.57 295.14 L636.92 311.24 L637.26 325.68 L637.61 337.73 L637.96 346.80 L638.30 352.44 L638.65 354.35 L639.00 351.26 L639.34 342.26 L639.69 328.07 L640.03 309.84 L640.38 289.05 L640.73 267.38 L641.07 246.59 L641.42 228.36 L641.76 214.17 L642.11 205.16 L642.46 202.08 L642.80 203.99 L643.15 209.62 L643.50 218.68 L643.84 230.74 L644.19 245.17 L644.54 261.25 L644.88 278.19 L645.23 295.13 L645.57 311.21 L645.92 325.65 L646.27 337.70 L646.61 346.76 L646.96 352.39 L647.31 354.30 L647.65 351.22 L648.00 342.22 L648.35 328.04 L648.69 309.82 L649.04 289.03 L649.38 267.38 L649.73 246.59 L650.08 228.37 L650.42 214.19 L650.77 205.19 L651.11 202.11 L651.46 204.02 L651.81 209.64 L652.15 218.71 L652.50 230.76 L652.85 245.19 L653.19 261.27 L653.54 278.20 L653.89 295.14 L654.23 311.22 L654.58 325.65 L654.92 337.70 L655.27 346.76 L655.62 352.39 L655.96 354.30 L656.31 351.22 L656.66 342.22 L657.00 328.04 L657.35 309.83 L657.69 289.05 L658.04 267.39 L658.39 246.62 L658.73 228.40 L659.08 214.22 L659.43 205.22 L659.77 202.14 L660.12 204.05 L660.46 209.68 L660.81 218.74 L661.16 230.79 L661.50 245.21 L661.85 261.29 L662.20 278.22 L662.54 295.15 L662.89 311.23 L663.24 325.66 L663.58 337.70 L663.93 346.77 L664.27 352.39 L664.62 354.30 L664.97 351.22 L665.31 342.23 L665.66 328.05 L666.01 309.84 L666.35 289.06 L666.70 267.41 L667.04 246.64 L667.39 228.43 L667.74 214.25 L668.08 205.26 L668.43 202.18 L668.77 204.09 L669.12 209.71 L669.47 218.77 L669.81 230.82 L670.16 245.24 L670.51 261.31 L670.85 278.24 L671.20 295.16 L671.55 311.24 L671.89 325.66 L672.24 337.71 L672.59 346.77 L672.93 352.39 L673.28 354.30 L673.62 351.22 L673.97 342.23 L674.32 328.06 L674.66 309.85 L675.01 289.08 L675.36 267.44 L675.70 246.67 L676.05 228.46 L676.39 214.29 L676.74 205.30 L677.09 202.22 L677.43 204.13 L677.78 209.75 L678.12 218.81 L678.47 230.85 L678.82 245.27 L679.16 261.34 L679.51 278.26 L679.86 295.18 L680.20 311.25 L680.55 325.67 L680.90 337.71 L681.24 346.77 L681.59 352.39 L681.94 354.30 L682.28 351.22 L682.63 342.23 L682.97 328.06 L683.32 309.86 L683.67 289.10 L684.01 267.46 L684.36 246.70 L684.70 228.50 L685.05 214.33 L685.40 205.34 L685.74 202.26 L686.09 204.17 L686.44 209.79 L686.78 218.85 L687.13 230.88 L687.47 245.30 L687.82 261.37 L688.17 278.28 L688.51 295.20 L688.86 311.26 L689.21 325.68 L689.55 337.72 L689.90 346.77 L690.25 352.39 L690.59 354.30 L690.94 351.22 L691.29 342.24 L691.63 328.07 L691.98 309.87 L692.32 289.12 L692.67 267.49 L693.02 246.73 L693.36 228.54 L693.71 214.37 L694.05 205.39 L694.40 202.31 L694.75 204.21 L695.09 209.83 L695.44 218.89 L695.79 230.92 L696.13 245.33 L696.48 261.39 L696.82 278.30 L697.17 295.21 L697.52 311.28 L697.86 325.69 L698.21 337.72 L698.56 346.77 L698.90 352.39 L699.25 354.30 L699.60 351.22 L699.94 342.24 L700.29 328.08 L700.63 309.89 L700.98 289.14 L701.33 267.52 L701.67 246.77 L702.02 228.58 L702.36 214.42 L702.71 205.43 L703.06 202.36 L703.40 204.26 L703.75 209.88 L704.10 218.93 L704.44 230.96 L704.79 245.36 L705.14 261.42 L705.48 278.32 L705.83 295.23 L706.17 311.28 L706.52 325.69 L706.87 337.72 L707.21 346.77 L707.56 352.39 L707.91 354.29 L708.25 351.21 L708.60 342.23 L708.95 328.08 L709.29 309.90 L709.64 289.16 L709.98 267.54 L710.33 246.80 L710.68 228.62 L711.02 214.46 L711.37 205.48 L711.71 202.41 L712.06 204.31 L712.41 209.93 L712.75 218.97 L713.10 231.00 L713.45 245.39 L713.79 261.44 L714.14 278.33 L714.49 295.23 L714.83 311.28 L715.18 325.67 L715.52 337.70 L715.87 346.74 L716.22 352.36 L716.56 354.26 L716.91 351.19 L717.26 342.21 L717.60 328.06 L717.95 309.89 L718.29 289.16 L718.64 267.56 L718.99 246.83 L719.33 228.66 L719.68 214.51 L720.03 205.53 L720.37 202.46 L720.72 204.36 L721.06 209.98 L721.41 219.02 L721.76 231.03 L722.10 245.42 L722.45 261.46 L722.80 278.35 L723.14 295.23 L723.49 311.27 L723.84 325.66 L724.18 337.68 L724.53 346.72 L724.87 352.33 L725.22 354.23 L725.57 351.16 L725.91 342.19 L726.26 328.05 L726.61 309.89 L726.95 289.17 L727.30 267.58 L727.64 246.86 L727.99 228.70 L728.34 214.56 L728.68 205.59 L729.03 202.51 L729.37 204.42 L729.72 210.02 L730.07 219.06 L730.41 231.07 L730.76 245.45 L731.11 261.48 L731.45 278.36 L731.80 295.23 L732.15 311.27 L732.49 325.65 L732.84 337.66 L733.19 346.69 L733.53 352.30 L733.88 354.20 L734.22 351.13 L734.57 342.17 L734.92 328.03 L735.26 309.88 L735.61 289.17 L735.96 267.60 L736.30 246.89 L736.65 228.74 L736.99 214.60 L737.34 205.64 L737.69 202.57 L738.03 204.47 L738.38 210.07 L738.72 219.11 L739.07 231.11 L739.42 245.48 L739.76 261.50 L740.11 278.37 L740.46 295.24 L740.80 311.26 L741.15 325.63 L741.50 337.64 L741.84 346.67 L742.19 352.27 L742.54 354.17 L742.88 351.10 L743.23 342.14 L743.57 328.02 L743.92 309.87 L744.27 289.17 L744.61 267.60 L744.96 246.90 L745.30 228.76 L745.65 214.63 L746.00 205.67 L746.34 202.60 L746.69 204.50 L747.04 210.10 L747.38 219.13 L747.73 231.13 L748.07 245.50 L748.42 261.51 L748.77 278.37 L749.11 295.23 L749.46 311.25 L749.81 325.61 L750.15 337.61 L750.50 346.64 L750.85 352.24 L751.19 354.14 L751.54 351.07 L751.89 342.12 L752.23 327.99 L752.58 309.85 L752.92 289.16 L753.27 267.59 L753.62 246.90 L753.96 228.75 L754.31 214.63 L754.65 205.67 L755.00 202.60 L755.35 204.50 L755.69 210.10 L756.04 219.13 L756.39 231.12 L756.73 245.49 L757.08 261.50 L757.42 278.36 L757.77 295.21 L758.12 311.23 L758.46 325.59 L758.81 337.59 L759.16 346.61 L759.50 352.22 L759.85 354.11 L760.20 351.05 L760.54 342.09 L760.89 327.97 L761.23 309.83 L761.58 289.14 L761.93 267.58 L762.27 246.89 L762.62 228.75 L762.96 214.63 L763.31 205.67 L763.66 202.60 L764.00 204.50 L764.35 210.10 L764.70 219.12 L765.04 231.12 L765.39 245.48 L765.74 261.49 L766.08 278.34 L766.43 295.20 L766.77 311.21 L767.12 325.57 L767.47 337.56 L767.81 346.58 L768.16 352.19 L768.51 354.09 L768.85 351.02 L769.20 342.06 L769.55 327.94 L769.89 309.81 L770.24 289.12 L770.58 267.56 L770.93 246.88 L771.28 228.74 L771.62 214.62 L771.97 205.67 L772.31 202.60 L772.66 204.50 L773.01 210.10 L773.35 219.12 L773.70 231.11 L774.05 245.47 L774.39 261.48 L774.74 278.33 L775.09 295.18 L775.43 311.19 L775.78 325.54 L776.12 337.53 L776.47 346.56 L776.82 352.16 L777.16 354.06 L777.51 350.99 L777.86 342.03 L778.20 327.92 L778.55 309.79 L778.89 289.11 L779.24 267.55 L779.59 246.87 L779.93 228.74 L780.28 214.62 L780.63 205.67 L780.97 202.60 L781.32 204.50 L781.66 210.10 L782.01 219.12 L782.36 231.11 L782.70 245.46 L783.05 261.47 L783.40 278.31 L783.74 295.16 L784.09 311.16 L784.44 325.52 L784.78 337.51 L785.13 346.53 L785.47 352.13 L785.82 354.03 L786.17 350.96 L786.51 342.01 L786.86 327.90 L787.21 309.77 L787.55 289.09 L787.90 267.54 L788.24 246.86 L788.59 228.73 L788.94 214.62 L789.28 205.67 L789.63 202.60 L789.97 204.50 L790.32 210.10 L790.67 219.12 L791.01 231.10 L791.36 245.45 L791.71 261.45 L792.05 278.30 L792.40 295.14 L792.75 311.14 L793.09 325.50 L793.44 337.48 L793.79 346.50 L794.13 352.10 L794.48 354.00 L794.82 350.93 L795.17 341.98 L795.52 327.87 L795.86 309.75 L796.21 289.07 L796.56 267.53 L796.90 246.85 L797.25 228.73 L797.59 214.62 L797.94 205.67 L798.29 202.60 L798.63 204.50 L798.98 210.10 L799.32 219.11 L799.67 231.10 L800.02 245.45 L800.36 261.44 L800.71 278.28 L801.06 295.13 L801.40 311.12 L801.75 325.47 L802.10 337.46 L802.44 346.47 L802.79 352.07 L803.14 353.97 L803.48 350.90 L803.83 341.95 L804.17 327.85 L804.52 309.72 L804.87 289.06 L805.21 267.51 L805.56 246.84 L805.90 228.72 L806.25 214.61 L806.60 205.67 L806.94 202.60 L807.29 204.50 L807.64 210.09 L807.98 219.11 L808.33 231.09 L808.67 245.44 L809.02 261.43 L809.37 278.27 L809.71 295.11 L810.06 311.10 L810.41 325.45 L810.75 337.43 L811.10 346.45 L811.45 352.04 L811.79 353.94 L812.14 350.87 L812.49 341.93 L812.83 327.82 L813.18 309.70 L813.52 289.04 L813.87 267.50 L814.22 246.84 L814.56 228.72 L814.91 214.61 L815.25 205.67 L815.60 202.60 L815.95 204.50 L816.29 210.09 L816.64 219.11 L816.99 231.08 L817.33 245.43 L817.68 261.42 L818.02 278.26 L818.37 295.09 L818.72 311.08 L819.06 325.43 L819.41 337.40 L819.76 346.42 L820.10 352.01 L820.45 353.91 L820.80 350.85 L821.14 341.90 L821.49 327.80 L821.83 309.68 L822.18 289.02 L822.53 267.49 L822.87 246.83 L823.22 228.71 L823.56 214.61 L823.91 205.66 L824.26 202.60 L824.60 204.50 L824.95 210.09 L825.30 219.10 L825.64 231.08 L825.99 245.42 L826.34 261.41 L826.68 278.24 L827.03 295.07 L827.37 311.06 L827.72 325.40 L828.07 337.38 L828.41 346.39 L828.76 351.98 L829.11 353.88 L829.45 350.82 L829.80 341.87 L830.15 327.77 L830.49 309.66 L830.84 289.01 L831.18 267.48 L831.53 246.82 L831.88 228.71 L832.22 214.61 L832.57 205.66 L832.91 202.60 L833.26 204.50 L833.61 210.09 L833.95 219.10 L834.30 231.07 L834.65 245.41 L834.99 261.40 L835.34 278.23 L835.69 295.05 L836.03 311.04 L836.38 325.38 L836.72 337.35 L837.07 346.36 L837.42 351.96 L837.76 353.85 L838.11 350.79 L838.46 341.85 L838.80 327.75 L839.15 309.64 L839.49 288.99 L839.84 267.46 L840.19 246.81 L840.53 228.70 L840.88 214.61 L841.23 205.66 L841.57 202.60 L841.92 204.50 L842.26 210.09 L842.61 219.10 L842.96 231.07 L843.30 245.40 L843.65 261.39 L844.00 278.21 L844.34 295.04 L844.69 311.02 L845.04 325.35 L845.38 337.33 L845.73 346.33 L846.07 351.93 L846.42 353.82 L846.77 350.76 L847.11 341.82 L847.46 327.73 L847.81 309.62 L848.15 288.97 L848.50 267.45 L848.84 246.80 L849.19 228.70 L849.54 214.60 L849.88 205.66 L850.23 202.60 L850.57 204.50 L850.92 210.09 L851.27 219.09 L851.61 231.06 L851.96 245.40 L852.31 261.37 L852.65 278.20 L853.00 295.02 L853.35 311.00 L853.69 325.33 L854.04 337.30 L854.39 346.31 L854.73 351.90 L855.08 353.79 L855.42 350.73 L855.77 341.79 L856.12 327.70 L856.46 309.60 L856.81 288.96 L857.16 267.44 L857.50 246.79 L857.85 228.69 L858.19 214.60 L858.54 205.66 L858.89 202.60 L859.23 204.50 L859.58 210.08 L859.92 219.09 L860.27 231.06 L860.62 245.39 L860.96 261.36 L861.31 278.18 L861.66 295.00 L862.00 310.98 L862.35 325.31 L862.70 337.27 L863.04 346.28 L863.39 351.87 L863.74 353.76 L864.08 350.70 L864.43 341.77 L864.77 327.68 L865.12 309.58 L865.47 288.94 L865.81 267.43 L866.16 246.78 L866.50 228.69 L866.85 214.60 L867.20 205.66 L867.54 202.60 L867.89 204.49 L868.24 210.08 L868.58 219.09 L868.93 231.05 L869.27 245.38 L869.62 261.35 L869.97 278.17 L870.31 294.98 L870.66 310.96 L871.01 325.28 L871.35 337.25 L871.70 346.25 L872.05 351.84 L872.39 353.74 L872.74 350.67 L873.09 341.74 L873.43 327.65 L873.78 309.56 L874.12 288.92 L874.47 267.41 L874.82 246.78 L875.16 228.68 L875.51 214.60 L875.85 205.66 L876.20 202.60 L876.55 204.49 L876.89 210.08 L877.24 219.08 L877.59 231.05 L877.93 245.37 L878.28 261.34" fill="none" stroke="#ff0000" stroke-width="1" stroke-linejoin="round"/><path d="M335.90 323.00 L336.15 323.28 L336.40 323.55 L336.65 323.81 L336.90 324.05 L337.15 324.28 L337.40 324.49 L337.65 324.70 L337.90 324.88 L338.15 325.06 L338.40 325.22 L338.65 325.36 L338.90 325.50 L339.15 325.61 L339.40 325.71 L339.65 325.80 L339.90 325.87 L340.15 325.93 L340.40 325.97 L340.65 325.99 L340.90 326.00 L341.15 325.98 L341.40 325.93 L341.65 325.85 L341.90 325.75 L342.15 325.62 L342.40 325.48 L342.65 325.33 L342.90 325.17 L343.15 325.00 L343.40 324.83 L343.65 324.67 L343.90 324.52 L344.15 324.38 L344.40 324.25 L344.65 324.15 L344.90 324.07 L345.15 324.02 L345.40 324.00 L345.65 324.04 L345.90 324.17 L346.15 324.36 L346.40 324.62 L346.65 324.92 L346.90 325.26 L347.15 325.63 L347.40 326.01 L347.65 326.41 L347.90 326.79 L348.15 327.17 L348.40 327.51 L348.65 327.83 L348.90 328.09 L349.15 328.30 L349.40 328.44 L349.65 328.50 L349.90 328.49 L350.15 328.44 L350.40 328.36 L350.65 328.25 L350.90 328.12 L351.15 327.97 L351.40 327.80 L351.65 327.63 L351.90 327.45 L352.15 327.27 L352.40 327.10 L352.65 326.93 L352.90 326.78 L353.15 326.65 L353.40 326.54 L353.65 326.46 L353.90 326.41 L354.15 326.40 L354.40 326.48 L354.65 326.65 L354.90 326.91 L355.15 327.25 L355.40 327.64 L355.65 328.09 L355.90 328.57 L356.15 329.08 L356.40 329.60 L356.65 330.12 L356.90 330.63 L357.15 331.11 L357.40 331.56 L357.65 331.95 L357.90 332.29 L358.15 332.55 L358.40 332.72 L358.65 332.80 L358.90 332.79 L359.15 332.75 L359.40 332.68 L359.65 332.58 L359.90 332.47 L360.15 332.34 L360.40 332.20 L360.65 332.05 L360.90 331.90 L361.15 331.75 L361.40 331.60 L361.65 331.46 L361.90 331.33 L362.15 331.22 L362.40 331.12 L362.65 331.05 L362.90 331.01 L363.15 331.00 L363.40 331.11 L363.65 331.37 L363.90 331.75 L364.15 332.24 L364.40 332.83 L364.65 333.49 L364.90 334.21 L365.15 334.98 L365.40 335.77 L365.65 336.57 L365.90 337.37 L366.15 338.14 L366.40 338.87 L366.65 339.55 L366.90 340.15 L367.15 340.66 L367.40 341.07 L367.65 341.35 L367.90 341.49 L368.15 341.49 L368.40 341.44 L368.65 341.34 L368.90 341.20 L369.15 341.04 L369.40 340.85 L369.65 340.65 L369.90 340.44 L370.15 340.22 L370.40 340.01 L370.65 339.81 L370.90 339.63 L371.15 339.47 L371.40 339.34 L371.65 339.25 L371.90 339.20 L372.15 339.24 L372.40 339.48 L372.65 339.92 L372.90 340.53 L373.15 341.31 L373.40 342.22 L373.65 343.27 L373.90 344.41 L374.15 345.64 L374.40 346.94 L374.65 348.29 L374.90 349.67 L375.15 351.06 L375.40 352.44 L375.65 353.79 L375.90 355.10 L376.15 356.35 L376.40 357.51 L376.65 358.58 L376.90 359.52 L377.15 360.33 L377.40 360.98 L377.65 361.45 L377.90 361.73 L378.15 361.80 L378.40 361.73 L378.65 361.59 L378.90 361.38 L379.15 361.12 L379.40 360.84 L379.65 360.54 L379.90 360.24 L380.15 359.97 L380.40 359.73 L380.65 359.55 L380.90 359.43 L381.15 359.41 L381.40 359.62 L381.65 360.12 L381.90 360.87 L382.15 361.86 L382.40 363.04 L382.65 364.41 L382.90 365.92 L383.15 367.56 L383.40 369.29 L383.65 371.27 L383.90 374.20 L384.15 378.04 L384.40 382.67 L384.65 387.99 L384.90 393.88 L385.15 400.22 L385.40 406.89 L385.65 413.79 L385.90 420.80 L386.15 427.79 L386.40 434.67 L386.65 441.32 L386.90 448.14 L387.15 455.32 L387.40 462.80 L387.65 470.52 L387.90 478.43 L388.15 486.48 L388.40 494.61 L388.65 502.77 L388.90 510.91 L389.15 518.96 L389.40 526.88 L389.65 534.97 L389.90 544.39 L390.15 554.58 L390.40 564.81 L390.65 574.37 L390.90 582.52 L391.15 588.54 L391.40 591.70 L391.65 591.09 L391.90 585.72 L392.15 575.87 L392.40 561.96 L392.65 544.40 L392.90 523.60 L393.15 499.96 L393.40 473.90 L393.65 445.82 L393.90 404.38 L394.15 338.57 L394.40 271.66 L394.65 220.28 L394.90 171.76 L395.15 133.59 L395.40 114.08 L395.65 100.99 L395.90 91.52 L396.15 87.14 L396.40 87.45 L396.65 89.14 L396.90 91.82 L397.15 95.25 L397.40 99.14 L397.65 103.25 L397.90 107.30 L398.15 111.03 L398.40 114.21 L398.65 117.09 L398.90 119.81 L399.15 122.49 L399.40 125.21 L399.65 128.06 L399.90 131.13 L400.15 134.53 L400.40 138.34 L400.65 142.84 L400.90 148.61 L401.15 155.21 L401.40 162.11 L401.65 168.75 L401.90 174.87 L402.15 180.81 L402.40 186.62 L402.65 192.34 L402.90 198.02 L403.15 203.70 L403.40 209.42 L403.65 215.23 L403.90 221.18 L404.15 227.30 L404.40 233.64 L404.65 240.24 L404.90 247.14 L405.15 254.74 L405.40 264.07 L405.65 274.39 L405.90 284.79 L406.15 294.36 L406.40 302.19 L406.65 307.36 L406.90 310.14 L407.15 312.52 L407.40 314.59 L407.65 316.34 L407.90 317.77 L408.15 318.91 L408.40 319.75 L408.65 320.34 L408.90 320.86 L409.15 321.32 L409.40 321.68 L409.65 321.92 L409.90 322.00 L410.15 321.91 L410.40 321.67 L410.65 321.31 L410.90 320.87 L411.15 320.40 L411.40 319.93 L411.65 319.49 L411.90 319.13 L412.15 318.89 L412.40 318.80 L412.65 319.24 L412.90 320.48 L413.15 322.42 L413.40 324.93 L413.65 327.91 L413.90 331.24 L414.15 334.81 L414.40 338.51 L414.65 342.45 L414.90 347.45 L415.15 353.47 L415.40 360.40 L415.65 368.10 L415.90 376.44 L416.15 385.29 L416.40 394.51 L416.65 403.99 L416.90 413.59 L417.15 423.18 L417.40 432.63 L417.65 441.82 L417.90 451.21 L418.15 460.97 L418.40 471.04 L418.65 481.35 L418.90 491.84 L419.15 502.43 L419.40 513.07 L419.65 523.68 L419.90 534.50 L420.15 547.68 L420.40 561.92 L420.65 575.14 L420.90 585.21 L421.15 590.05 L421.40 583.89 L421.65 560.96 L421.90 525.99 L422.15 484.00 L422.40 440.00 L422.65 380.02 L422.90 302.39 L423.15 230.56 L423.40 184.80 L423.65 151.93 L423.90 127.29 L424.15 110.22 L424.40 95.48 L424.65 85.83 L424.90 85.21 L425.15 96.40 L425.40 113.30 L425.65 132.17 L425.90 156.59 L426.15 171.82 L426.40 180.00 L426.65 186.72 L426.90 192.09 L427.15 196.19 L427.40 199.13 L427.65 201.16 L427.90 202.97 L428.15 204.60 L428.40 206.02 L428.65 207.18 L428.90 208.06 L429.15 208.61 L429.40 208.80 L429.65 208.75 L429.90 208.63 L430.15 208.45 L430.40 208.24 L430.65 208.00 L430.90 207.77 L431.15 207.57 L431.40 207.41 L431.65 207.32 L431.90 207.35 L432.15 207.87 L432.40 208.88 L432.65 210.27 L432.90 211.94 L433.15 213.78 L433.40 215.70 L433.65 217.60 L433.90 219.36 L434.15 220.97 L434.40 222.69 L434.65 224.52 L434.90 226.42 L435.15 228.33 L435.40 230.21 L435.65 232.02 L435.90 233.70 L436.15 235.23 L436.40 236.54 L436.65 237.66 L436.90 238.78 L437.15 239.89 L437.40 240.97 L437.65 242.00 L437.90 242.95 L438.15 243.80 L438.40 244.51 L438.65 245.06 L438.90 245.43 L439.15 245.60 L439.40 245.58 L439.65 245.49 L439.90 245.35 L440.15 245.17 L440.40 244.95 L440.65 244.71 L440.90 244.45 L441.15 244.20 L441.40 243.95 L441.65 243.72 L441.90 243.52 L442.15 243.36 L442.40 243.25 L442.65 243.20 L442.90 243.26 L443.15 243.49 L443.40 243.86 L443.65 244.35 L443.90 244.91 L444.15 245.53 L444.40 246.18 L444.65 246.81 L444.90 247.41 L445.15 247.93 L445.40 248.36 L445.65 248.69 L445.90 249.02 L446.15 249.35 L446.40 249.68 L446.65 249.98 L446.90 250.26 L447.15 250.50 L447.40 250.69 L447.65 250.83 L447.90 250.89 L448.15 250.89 L448.40 250.86 L448.65 250.81 L448.90 250.73 L449.15 250.64 L449.40 250.53 L449.65 250.42 L449.90 250.30 L450.15 250.18 L450.40 250.06 L450.65 249.94 L450.90 249.84 L451.15 249.75 L451.40 249.68 L451.65 249.63 L451.90 249.60 L452.15 249.61 L452.40 249.64 L452.65 249.70 L452.90 249.79 L453.15 249.89 L453.40 250.01 L453.65 250.15 L453.90 250.29 L454.15 250.44 L454.40 250.59 L454.65 250.74 L454.90 250.88 L455.15 251.01 L455.40 251.13 L455.65 251.23 L455.90 251.31 L456.15 251.37 L456.40 251.40 L456.65 251.39 L456.90 251.36 L457.15 251.31 L457.40 251.24 L457.65 251.15 L457.90 251.05 L458.15 250.94 L458.40 250.84 L458.65 250.73 L458.90 250.63 L459.15 250.55 L459.40 250.48 L459.65 250.43 L459.90 250.40 L460.00 250.40 L462.00 250.57 L464.00 250.79 L466.00 250.71 L468.00 250.41 L470.00 250.10 L472.00 249.86 L474.00 249.62 L476.00 249.40 L478.00 249.19 L480.00 248.98 L482.00 248.78 L484.00 248.59 L486.00 248.43 L488.00 248.30 L490.00 248.19 L492.00 248.08 L494.00 247.97 L496.00 247.86 L498.00 247.77 L500.00 247.67 L502.00 247.58 L504.00 247.50 L506.00 247.43 L508.00 247.37 L510.00 247.31 L512.00 247.26 L514.00 247.23 L516.00 247.21 L518.00 247.19 L520.00 247.18 L522.00 247.17 L524.00 247.16 L526.00 247.16 L528.00 247.15 L530.00 247.14 L532.00 247.13 L534.00 247.12 L536.00 247.11 L538.00 247.11 L540.00 247.10 L542.00 247.09 L544.00 247.09 L546.00 247.08 L548.00 247.07 L550.00 247.07 L552.00 247.06 L554.00 247.06 L556.00 247.05 L558.00 247.05 L560.00 247.04 L562.00 247.04 L564.00 247.03 L566.00 247.03 L568.00 247.03 L570.00 247.02 L572.00 247.02 L574.00 247.02 L576.00 247.01 L578.00 247.01 L580.00 247.01 L582.00 247.01 L584.00 247.01 L586.00 247.00 L588.00 247.00 L590.00 247.00 L592.00 247.00 L594.00 247.00 L596.00 247.00 L598.00 247.00 L600.00 247.00 L602.00 247.00 L604.00 247.00 L606.00 247.00 L608.00 247.00 L610.00 247.00 L612.00 247.00 L614.00 247.00 L616.00 247.00 L618.00 247.00 L620.00 247.00 L622.00 247.00 L624.00 247.00 L626.00 247.00 L628.00 247.00 L630.00 247.00 L632.00 247.00 L634.00 247.00 L636.00 247.00 L638.00 247.00 L640.00 247.00 L642.00 247.00 L644.00 247.00 L646.00 247.00 L648.00 247.00 L650.00 247.00 L652.00 247.00 L654.00 247.00 L656.00 247.00 L658.00 247.00 L660.00 247.00 L662.00 247.00 L664.00 247.00 L666.00 247.00 L668.00 247.00 L670.00 247.00 L672.00 247.00 L674.00 247.00 L676.00 247.00 L678.00 247.00 L680.00 247.00 L682.00 247.00 L684.00 247.00 L686.00 247.00 L688.00 247.00 L690.00 247.00 L692.00 247.00 L694.00 247.00 L696.00 247.00 L698.00 247.00 L700.00 247.00 L702.00 247.00 L704.00 247.00 L706.00 247.00 L708.00 247.00 L710.00 247.00 L712.00 247.00 L714.00 247.00 L716.00 247.00 L718.00 247.00 L720.00 247.00 L722.00 247.00 L724.00 247.00 L726.00 247.00 L728.00 247.00 L730.00 247.00 L732.00 247.00 L734.00 247.00 L736.00 247.00 L738.00 247.00 L740.00 247.00 L742.00 247.00 L744.00 247.00 L746.00 247.00 L748.00 247.00 L750.00 247.00 L752.00 247.00 L754.00 247.00 L756.00 247.00 L758.00 247.00 L760.00 247.00 L762.00 247.00 L764.00 247.00 L766.00 247.00 L768.00 247.00 L770.00 247.00 L772.00 247.00 L774.00 247.00 L776.00 247.00 L778.00 247.00 L780.00 247.00 L782.00 247.00 L784.00 247.00 L786.00 247.00 L788.00 247.00 L790.00 247.00 L792.00 247.00 L794.00 247.00 L796.00 247.00 L798.00 247.00 L800.00 247.00 L802.00 247.00 L804.00 247.00 L806.00 247.00 L808.00 247.00 L810.00 247.00 L812.00 247.00 L814.00 247.00 L816.00 247.00 L818.00 247.00 L820.00 247.00 L822.00 247.00 L824.00 247.00 L826.00 247.00 L828.00 247.00 L830.00 247.00 L832.00 247.00 L834.00 247.00 L836.00 247.00 L838.00 247.00 L840.00 247.00 L842.00 247.00 L844.00 247.00 L846.00 247.00 L848.00 247.00 L850.00 247.00 L852.00 247.00 L854.00 247.00 L856.00 247.00 L858.00 247.00 L860.00 247.00 L862.00 247.00 L864.00 247.00 L866.00 247.00 L868.00 247.00 L870.00 247.00 L872.00 247.00 L874.00 247.00 L876.00 247.00 L878.00 247.00 L878.60 247.00" fill="none" stroke="#0000ff" stroke-width="1" stroke-linejoin="round"/><line x1="335.9" y1="308.30" x2="878.6" y2="308.30" stroke="#00ff00" stroke-width="1"/></g></svg><rect x="336" y="68" width="542" height="541" fill="none" stroke="#858585" stroke-width="2"/><line x1="335.90" y1="609.5" x2="335.90" y2="603" stroke="#333333" stroke-width="1.6"/><line x1="335.90" y1="67" x2="335.90" y2="73.5" stroke="#333333" stroke-width="1.6"/><text x="335.90" y="628" font-size="13" text-anchor="middle" fill="#262626">0</text><line x1="390.17" y1="609.5" x2="390.17" y2="603" stroke="#333333" stroke-width="1.6"/><line x1="390.17" y1="67" x2="390.17" y2="73.5" stroke="#333333" stroke-width="1.6"/><text x="390.17" y="628" font-size="13" text-anchor="middle" fill="#262626">1</text><line x1="444.44" y1="609.5" x2="444.44" y2="603" stroke="#333333" stroke-width="1.6"/><line x1="444.44" y1="67" x2="444.44" y2="73.5" stroke="#333333" stroke-width="1.6"/><text x="444.44" y="628" font-size="13" text-anchor="middle" fill="#262626">2</text><line x1="498.71" y1="609.5" x2="498.71" y2="603" stroke="#333333" stroke-width="1.6"/><line x1="498.71" y1="67" x2="498.71" y2="73.5" stroke="#333333" stroke-width="1.6"/><text x="498.71" y="628" font-size="13" text-anchor="middle" fill="#262626">3</text><line x1="552.98" y1="609.5" x2="552.98" y2="603" stroke="#333333" stroke-width="1.6"/><line x1="552.98" y1="67" x2="552.98" y2="73.5" stroke="#333333" stroke-width="1.6"/><text x="552.98" y="628" font-size="13" text-anchor="middle" fill="#262626">4</text><line x1="607.25" y1="609.5" x2="607.25" y2="603" stroke="#333333" stroke-width="1.6"/><line x1="607.25" y1="67" x2="607.25" y2="73.5" stroke="#333333" stroke-width="1.6"/><text x="607.25" y="628" font-size="13" text-anchor="middle" fill="#262626">5</text><line x1="661.52" y1="609.5" x2="661.52" y2="603" stroke="#333333" stroke-width="1.6"/><line x1="661.52" y1="67" x2="661.52" y2="73.5" stroke="#333333" stroke-width="1.6"/><text x="661.52" y="628" font-size="13" text-anchor="middle" fill="#262626">6</text><line x1="715.79" y1="609.5" x2="715.79" y2="603" stroke="#333333" stroke-width="1.6"/><line x1="715.79" y1="67" x2="715.79" y2="73.5" stroke="#333333" stroke-width="1.6"/><text x="715.79" y="628" font-size="13" text-anchor="middle" fill="#262626">7</text><line x1="770.06" y1="609.5" x2="770.06" y2="603" stroke="#333333" stroke-width="1.6"/><line x1="770.06" y1="67" x2="770.06" y2="73.5" stroke="#333333" stroke-width="1.6"/><text x="770.06" y="628" font-size="13" text-anchor="middle" fill="#262626">8</text><line x1="824.33" y1="609.5" x2="824.33" y2="603" stroke="#333333" stroke-width="1.6"/><line x1="824.33" y1="67" x2="824.33" y2="73.5" stroke="#333333" stroke-width="1.6"/><text x="824.33" y="628" font-size="13" text-anchor="middle" fill="#262626">9</text><line x1="878.60" y1="609.5" x2="878.60" y2="603" stroke="#333333" stroke-width="1.6"/><line x1="878.60" y1="67" x2="878.60" y2="73.5" stroke="#333333" stroke-width="1.6"/><text x="878.60" y="628" font-size="13" text-anchor="middle" fill="#262626">10</text><line x1="335" y1="608.80" x2="341.5" y2="608.80" stroke="#333333" stroke-width="1.6"/><line x1="879" y1="608.80" x2="872.5" y2="608.80" stroke="#333333" stroke-width="1.6"/><text x="330.8" y="614.90" font-size="13" text-anchor="end" fill="#262626">-10</text><line x1="335" y1="548.70" x2="341.5" y2="548.70" stroke="#333333" stroke-width="1.6"/><line x1="879" y1="548.70" x2="872.5" y2="548.70" stroke="#333333" stroke-width="1.6"/><text x="330.8" y="554.80" font-size="13" text-anchor="end" fill="#262626">-8</text><line x1="335" y1="488.60" x2="341.5" y2="488.60" stroke="#333333" stroke-width="1.6"/><line x1="879" y1="488.60" x2="872.5" y2="488.60" stroke="#333333" stroke-width="1.6"/><text x="330.8" y="494.70" font-size="13" text-anchor="end" fill="#262626">-6</text><line x1="335" y1="428.50" x2="341.5" y2="428.50" stroke="#333333" stroke-width="1.6"/><line x1="879" y1="428.50" x2="872.5" y2="428.50" stroke="#333333" stroke-width="1.6"/><text x="330.8" y="434.60" font-size="13" text-anchor="end" fill="#262626">-4</text><line x1="335" y1="368.40" x2="341.5" y2="368.40" stroke="#333333" stroke-width="1.6"/><line x1="879" y1="368.40" x2="872.5" y2="368.40" stroke="#333333" stroke-width="1.6"/><text x="330.8" y="374.50" font-size="13" text-anchor="end" fill="#262626">-2</text><line x1="335" y1="308.30" x2="341.5" y2="308.30" stroke="#333333" stroke-width="1.6"/><line x1="879" y1="308.30" x2="872.5" y2="308.30" stroke="#333333" stroke-width="1.6"/><text x="330.8" y="314.40" font-size="13" text-anchor="end" fill="#262626">0</text><line x1="335" y1="248.20" x2="341.5" y2="248.20" stroke="#333333" stroke-width="1.6"/><line x1="879" y1="248.20" x2="872.5" y2="248.20" stroke="#333333" stroke-width="1.6"/><text x="330.8" y="254.30" font-size="13" text-anchor="end" fill="#262626">2</text><line x1="335" y1="188.10" x2="341.5" y2="188.10" stroke="#333333" stroke-width="1.6"/><line x1="879" y1="188.10" x2="872.5" y2="188.10" stroke="#333333" stroke-width="1.6"/><text x="330.8" y="194.20" font-size="13" text-anchor="end" fill="#262626">4</text><line x1="335" y1="128.00" x2="341.5" y2="128.00" stroke="#333333" stroke-width="1.6"/><line x1="879" y1="128.00" x2="872.5" y2="128.00" stroke="#333333" stroke-width="1.6"/><text x="330.8" y="134.10" font-size="13" text-anchor="end" fill="#262626">6</text><line x1="335" y1="67.90" x2="341.5" y2="67.90" stroke="#333333" stroke-width="1.6"/><line x1="879" y1="67.90" x2="872.5" y2="67.90" stroke="#333333" stroke-width="1.6"/><text x="330.8" y="74.00" font-size="13" text-anchor="end" fill="#262626">8</text><text x="606.5" y="649" font-size="14.2" text-anchor="middle" fill="#262626">time</text><text transform="translate(303.4,337.5) rotate(-90)" x="0" y="0" font-size="15" text-anchor="middle" fill="#262626">internuclear momentum</text><rect x="672.5" y="81.5" width="192.5" height="52.5" fill="#ffffff" stroke="#6e6e6e" stroke-width="1.2"/><line x1="677" y1="91" x2="707" y2="91" stroke="#0000ff" stroke-width="1"/><line x1="677" y1="107.5" x2="707" y2="107.5" stroke="#ff0000" stroke-width="1"/><line x1="677" y1="124" x2="707" y2="124" stroke="#00ff00" stroke-width="1"/><text x="710" y="96" font-size="12" fill="#000">A-B internuclear momentum</text><text x="710" y="113" font-size="12" fill="#000">B-C internuclear momentum</text><text x="710" y="129" font-size="12" fill="#000">A-C internuclear momentum</text>
</svg>
</body></html>
